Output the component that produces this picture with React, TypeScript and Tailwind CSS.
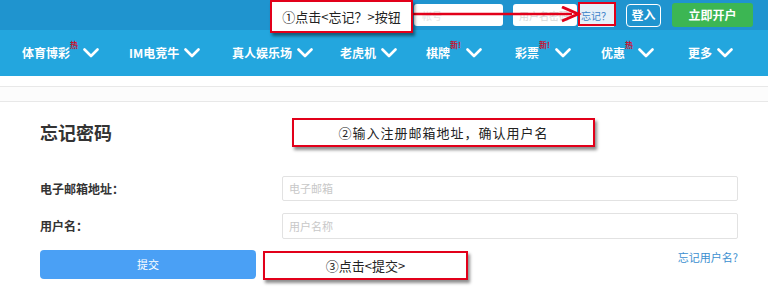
import React from 'react';

const navItems: Array<{ label: string; badge?: string; w: string }> = [
  { label: '体育博彩', badge: '热', w: 'w-[107px]' },
  { label: 'IM电竞牛', w: 'w-[103px]' },
  { label: '真人娱乐场', w: 'w-[108px]' },
  { label: '老虎机', w: 'w-[86px]' },
  { label: '棋牌', badge: '新!', w: 'w-[89px]' },
  { label: '彩票', badge: '新!', w: 'w-[86px]' },
  { label: '优惠', badge: '热', w: 'w-[87px]' },
  { label: '更多', w: 'w-[60px]' },
];

const Chevron = () => (
  <svg width="16" height="10" viewBox="0 0 16 10" className="ml-[5px] shrink-0">
    <path d="M1.5 1.5 L8 8 L14.5 1.5" fill="none" stroke="white" strokeWidth="2.6" strokeLinecap="round" strokeLinejoin="round" />
  </svg>
);

const Callout = ({ className, children }: { className: string; children: React.ReactNode }) => (
  <div
    className={`absolute bg-white border-2 border-[#e2001a] shadow-[2px_3px_3px_rgba(0,0,0,0.45)] flex items-center justify-center text-[13px] text-[#222] ${className}`}
  >
    {children}
  </div>
);

const App: React.FC = () => {
  return (
    <div className="relative w-[768px] h-[297px] overflow-hidden bg-white font-['Noto_Sans_CJK_SC','Noto_Sans',sans-serif]">
      {/* top bar */}
      <div className="h-[30px] bg-[#1f94cf] flex items-center justify-end pr-[15px]">
        <div className="w-[89px] h-[22px] bg-white rounded-[3px] flex items-center px-[8px] text-[10px] text-[#e4e4e4]">帐号</div>
        <div className="ml-[10px] w-[64px] h-[22px] bg-white rounded-[3px] flex items-center px-[6px] text-[10px] text-[#d8d8d8]">用户名密码</div>
        <div className="ml-[1px] w-[36px] h-[23px] bg-[#e6f0f8] flex items-center justify-center text-[10px] text-[#3b82c8]">忘记？</div>
        <div className="ml-[12px] w-[35px] h-[23px] border-[1.5px] border-white rounded-[4px] flex items-center justify-center text-[12px] font-bold text-white">登入</div>
        <div className="ml-[11px] w-[81px] h-[24px] bg-[#3cb653] rounded-[3px] flex items-center justify-center text-[12px] font-bold text-white">立即开户</div>
      </div>

      {/* nav */}
      <div className="h-[46px] bg-[#23a6de] flex items-center pl-[22px]">
        {navItems.map((item) => (
          <div key={item.label} className={`${item.w} flex items-center shrink-0`}>
            <span className="text-[12px] font-bold text-white leading-none">{item.label}</span>
            {item.badge && (
              <span className="self-start -mt-[6px] text-[8px] leading-none font-bold text-[#c8102e]">{item.badge}</span>
            )}
            <Chevron />
          </div>
        ))}
      </div>

      <div className="h-[10px]" />
      <div className="h-[16px] border-y border-[#e8e8e8] bg-[#fcfcfc]" />

      {/* form */}
      <div className="pl-[40px] pt-[18px]">
        <h1 className="text-[18px] leading-[24px] font-bold text-[#333]">忘记密码</h1>

        <div className="mt-[32px] flex items-center">
          <label className="w-[242px] shrink-0 text-[12px] font-bold text-[#333]">电子邮箱地址：</label>
          <div className="w-[456px] h-[25px] border border-[#e2e2e2] rounded-[2px] flex items-center px-[6px] text-[11px] text-[#c8c8c8]">电子邮箱</div>
        </div>

        <div className="mt-[12px] flex items-center">
          <label className="w-[242px] shrink-0 text-[12px] font-bold text-[#333]">用户名：</label>
          <div className="w-[456px] h-[26px] border border-[#e2e2e2] rounded-[2px] flex items-center px-[6px] text-[11px] text-[#c8c8c8]">用户名称</div>
        </div>

        <div className="mt-[11px] flex items-center w-[698px]">
          <button className="w-[216px] h-[29px] bg-[#4aa0f5] rounded-[4px] text-[11px] text-white">提交</button>
          <div className="flex-1" />
          <span className="mt-[-14px] text-[11px] text-[#3b8fd0]">忘记用户名?</span>
        </div>
      </div>

      {/* annotations */}
      <svg className="absolute left-[410px] top-[6px]" width="172" height="18" viewBox="0 0 172 18">
        <line x1="0" y1="8" x2="162" y2="8" stroke="#e2001a" strokeWidth="2.5" />
        <path d="M152 1 L168 8 L152 15" fill="none" stroke="#e2001a" strokeWidth="3" strokeLinejoin="miter" />
      </svg>
      <div className="absolute left-[578px] top-[2px] w-[38px] h-[24px] border-2 border-[#e2001a]" />
      <Callout className="left-[270px] top-[0px] w-[143px] h-[33px]">①点击&lt;忘记？&gt;按钮</Callout>
      <Callout className="left-[292px] top-[118px] w-[303px] h-[29px] tracking-[1px]">②输入注册邮箱地址，确认用户名</Callout>
      <Callout className="left-[263px] top-[251px] w-[205px] h-[29px]">③点击&lt;提交&gt;</Callout>
    </div>
  );
};

export default App;
